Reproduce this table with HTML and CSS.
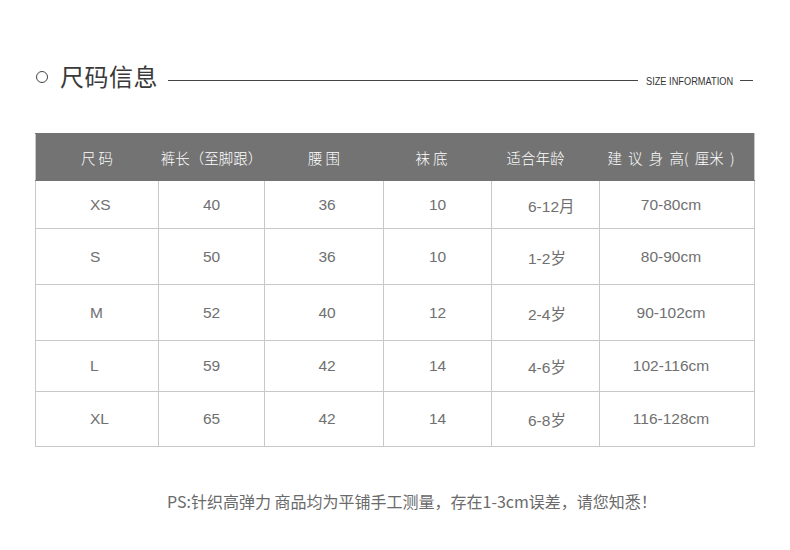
FILE: index.html
```html
<!DOCTYPE html>
<html lang="zh">
<head>
<meta charset="utf-8">
<link rel="stylesheet" href="styles.css">
</head>
<body>
<div class="page">
  <div class="title-row">
    <span class="ring"></span>
    <h1 class="title">尺码信息</h1>
    <span class="rule rule-long"></span>
    <span class="sub"><span class="sub-text">SIZE INFORMATION</span></span>
    <span class="rule rule-short"></span>
  </div>
  <table class="size-table">
    <colgroup>
      <col class="c1"><col class="c2"><col class="c3"><col class="c4"><col class="c5"><col class="c6">
    </colgroup>
    <thead>
      <tr class="head">
        <th>尺 码</th><th>裤长（至脚跟）</th><th>腰 围</th><th class="h4">袜 底</th><th class="h5">适合年龄</th><th class="h6">建 议 身 高( 厘米 )</th>
      </tr>
    </thead>
    <tbody>
      <tr class="r1"><td class="size">XS</td><td>40</td><td class="waist">36</td><td>10</td><td class="age">6-12月</td><td class="height">70-80cm</td></tr>
      <tr class="r2"><td class="size">S</td><td>50</td><td class="waist">36</td><td>10</td><td class="age">1-2岁</td><td class="height">80-90cm</td></tr>
      <tr class="r3"><td class="size">M</td><td>52</td><td class="waist">40</td><td>12</td><td class="age">2-4岁</td><td class="height">90-102cm</td></tr>
      <tr class="r4"><td class="size">L</td><td>59</td><td class="waist">42</td><td>14</td><td class="age">4-6岁</td><td class="height">102-116cm</td></tr>
      <tr class="r5"><td class="size">XL</td><td>65</td><td class="waist">42</td><td>14</td><td class="age">6-8岁</td><td class="height">116-128cm</td></tr>
    </tbody>
  </table>
  <p class="note">PS:针织高弹力 商品均为平铺手工测量，存在1-3cm误差，请您知悉！</p>
</div>
</body>
</html>
```

FILE: styles.css
```css
html, body {
  margin: 0;
  padding: 0;
  background: #ffffff;
}
.page {
  width: 790px;
  height: 550px;
  padding-top: 60px;
  box-sizing: border-box;
  font-family: "Noto Sans CJK SC", "Noto Sans", sans-serif;
}
.title-row {
  display: flex;
  align-items: center;
  height: 32px;
  padding-left: 36px;
}
.ring {
  width: 12px;
  height: 12px;
  border: 1.3px solid #444;
  border-radius: 50%;
  box-sizing: border-box;
  margin-right: 12px;
  margin-top: 2px;
}
.title {
  margin: 0;
  font-size: 24px;
  font-weight: 400;
  color: #3a3a3a;
  letter-spacing: 0.5px;
  line-height: 32px;
}
.rule {
  height: 1px;
  background: #444;
  margin-top: 9px;
}
.rule-long {
  width: 470px;
  margin-left: 10px;
}
.rule-short {
  width: 13px;
  margin-left: 5px;
}
.sub {
  display: block;
  width: 89px;
  height: 14px;
  margin-left: 8px;
  margin-top: 9px;
  position: relative;
  overflow: visible;
}
.sub-text {
  position: absolute;
  left: 0;
  top: 0;
  font-family: "Liberation Sans", Arial, sans-serif;
  font-size: 11px;
  line-height: 14px;
  color: #333;
  white-space: nowrap;
  transform: scaleX(0.84);
  transform-origin: left center;
}
.size-table {
  margin-top: 41px;
  margin-left: 35px;
  border-collapse: collapse;
  table-layout: fixed;
  width: 719px;
}
.c1 { width: 123px; }
.c2 { width: 106px; }
.c3 { width: 119px; }
.c4 { width: 108px; }
.c5 { width: 108px; }
.c6 { width: 155px; }
.size-table th,
.size-table td {
  border: 1px solid #c8c8c8;
  text-align: center;
  padding: 0;
}
.head th {
  background: #737373;
  color: #ffffff;
  font-family: "Noto Sans CJK SC", sans-serif;
  font-weight: 300;
  font-size: 14.5px;
  height: 46px;
  border-color: #737373;
  white-space: nowrap;
}
.head th:first-child { border-left-color: #c8c8c8; }
.head th:last-child { border-right-color: #c8c8c8; }
.size-table thead tr { border-top: 1px solid #c8c8c8; }
.head th.h4 { padding-right: 12px; }
.head th.h5 { padding-right: 20px; }
.head th.h6 { padding-right: 12px; word-spacing: 3px; }
.size-table td {
  font-family: "Liberation Sans", Arial, "Noto Sans CJK SC", sans-serif;
  font-size: 15.5px;
  color: #707070;
}
.size-table td.size {
  text-align: left;
  padding-left: 54px;
}
.size-table td.waist {
  padding-left: 6px;
}
.size-table td.age {
  text-align: left;
  padding-left: 36px;
}
.size-table td.height {
  padding-right: 12px;
}
.r1 td { height: 47px; }
.r2 td { height: 55px; }
.r3 td { height: 55px; }
.r4 td { height: 50px; }
.r5 td { height: 54px; }
.note {
  margin: 42px 0 0 167px;
  font-size: 16px;
  line-height: 24px;
  color: #6a6a6a;
  font-weight: 400;
  white-space: nowrap;
}
```
